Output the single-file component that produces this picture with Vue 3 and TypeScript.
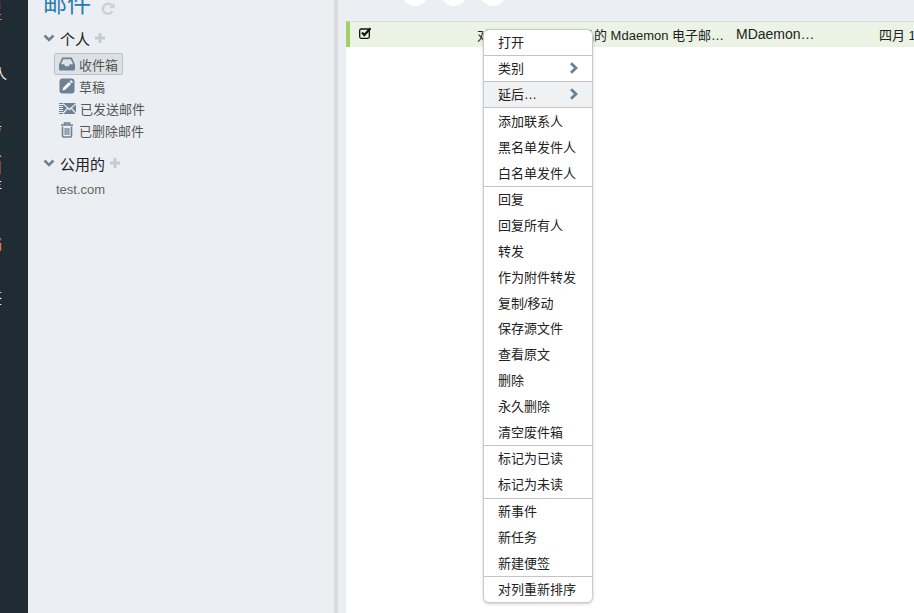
<script setup lang="ts">
interface Folder { name: string; icon: string; active?: boolean }
const folders: Folder[] = [
  { name: '收件箱', icon: 'inbox', active: true },
  { name: '草稿', icon: 'edit' },
  { name: '已发送邮件', icon: 'send' },
  { name: '已删除邮件', icon: 'trash' },
]
interface MenuItem { label: string; arrow?: boolean; hover?: boolean }
const groups: MenuItem[][] = [
  [{ label: '打开' }],
  [{ label: '类别', arrow: true }],
  [{ label: '延后…', arrow: true, hover: true }],
  [{ label: '添加联系人' }, { label: '黑名单发件人' }, { label: '白名单发件人' }],
  ['回复', '回复所有人', '转发', '作为附件转发', '复制/移动', '保存源文件', '查看原文', '删除', '永久删除', '清空废件箱'].map((label) => ({ label })),
  [{ label: '标记为已读' }, { label: '标记为未读' }],
  [{ label: '新事件' }, { label: '新任务' }, { label: '新建便签' }],
  [{ label: '对列重新排序' }],
]
const railItems = [
  { text: '信', cls: 'r-red', top: -7 },
  { text: '件', cls: 'r-orange', top: -2 },
  { text: '人', cls: 'r-white wide', top: 38 },
  { text: '务', cls: 'r-white', top: 35 },
  { text: '箱', cls: 'r-gold', top: 17 },
  { text: '存', cls: 'r-white', top: 0 },
  { text: '档', cls: 'r-orange', top: 40 },
  { text: '签', cls: 'r-white', top: 36 },
]
</script>

<template>
  <div class="page">
    <nav class="rail">
      <div v-for="r in railItems" :key="r.text" class="rail-item" :class="r.cls" :style="{ marginTop: r.top + 'px' }">{{ r.text }}</div>
    </nav>

    <aside class="side">
      <h1 class="title">邮件
        <svg class="refresh" viewBox="0 0 14 14" width="14" height="14"><path d="M11.300 9.200A5 5 0 1 1 10.600 3.400" fill="none" stroke="#cdd0d3" stroke-width="2.400"/><path d="M13.400 0.800v5.400H8z" fill="#cdd0d3"/></svg>
      </h1>

      <div class="group-head">
        <svg class="chev" viewBox="0 0 12 8" width="12" height="8"><path d="M1.500 1.500 6 6l4.500-4.500" fill="none" stroke="#6f8291" stroke-width="2.600"/></svg>
        <span>个人</span>
        <svg class="plus" viewBox="0 0 10 10" width="10" height="10"><path d="M5 0v10M0 5h10" stroke="#c2ccd5" stroke-width="3"/></svg>
      </div>

      <ul class="folders">
        <li v-for="f in folders" :key="f.name" class="folder" :class="{ active: f.active }">
          <svg v-if="f.icon === 'inbox'" class="ficon" viewBox="0 0 16 14" width="16" height="14"><path fill-rule="evenodd" fill="#6c8294" d="M3.200 0.500h9.600L16 7.500v4.500a1.500 1.500 0 0 1-1.500 1.500h-13A1.500 1.500 0 0 1 0 12V7.500zM4.200 2.200 2 7.200h3.200l1 2h3.600l1-2H14l-2.200-5z"/></svg>
          <svg v-else-if="f.icon === 'edit'" class="ficon" viewBox="0 0 16 16" width="16" height="16"><rect x="0.500" y="0.500" width="15" height="15" rx="3" fill="#6c8294"/><path d="M3.500 12.500l.7-2.800 5.800-5.800 2.100 2.100-5.800 5.800zM10.700 3.200l.8-.7a1 1 0 0 1 1.300 0l.7.7a1 1 0 0 1 0 1.300l-.7.8z" fill="#fff"/></svg>
          <svg v-else-if="f.icon === 'send'" class="ficon" viewBox="0 0 17 11" width="17" height="11"><path d="M0 .5h4M0 2.500h4M0 4.500h4M0 6.500h4M0 8.500h4M0 10.500h4" stroke="#6c8294"/><path d="M4 0h13L10.500 5.500zM4 1.500l4 3.500-4 4.500zM17 1.500v8l-4-4.500zM4.500 11l4.300-5 1.700 1.400 1.700-1.400 4.300 5z" fill="#6c8294"/></svg>
          <svg v-else class="ficon" viewBox="0 0 16 16" width="16" height="16"><path d="M5.500 2.500V1h5v1.500M2 3h12" fill="none" stroke="#6c8294" stroke-width="1.600"/><path d="M3.500 4.500v9.300A1.200 1.200 0 0 0 4.700 15h6.600a1.200 1.200 0 0 0 1.200-1.200V4.500" fill="none" stroke="#6c8294" stroke-width="1.600"/><path d="M6.200 6v7M8 6v7M9.800 6v7" stroke="#6c8294" stroke-width="1.200"/></svg>
          <span>{{ f.name }}</span>
        </li>
      </ul>

      <div class="group-head second">
        <svg class="chev" viewBox="0 0 12 8" width="12" height="8"><path d="M1.500 1.500 6 6l4.500-4.500" fill="none" stroke="#6f8291" stroke-width="2.600"/></svg>
        <span>公用的</span>
        <svg class="plus" viewBox="0 0 10 10" width="10" height="10"><path d="M5 0v10M0 5h10" stroke="#c2ccd5" stroke-width="3"/></svg>
      </div>
      <div class="domain">test.com</div>
    </aside>

    <div class="split"></div>

    <main class="main">
      <div class="toolbar">
        <span class="dot"></span><span class="dot"></span><span class="dot"></span>
      </div>
      <div class="list">
        <div class="row">
          <svg class="check" viewBox="0 0 13 12" width="13" height="12"><rect x="0.700" y="2" width="9.600" height="9.300" rx="1.500" fill="none" stroke="#111" stroke-width="1.300"/><path d="M3 5.500l2.300 2.500L11.500 1.200" fill="none" stroke="#111" stroke-width="2.200"/></svg>
          <span class="subject">对选择世界一流产品的 Mdaemon 电子邮…</span>
          <span class="from">MDaemon…</span>
          <span class="date">四月 17</span>
        </div>
      </div>
    </main>

    <div class="menu">
      <ul v-for="(g, i) in groups" :key="i" class="menu-group">
        <li v-for="m in g" :key="m.label" class="menu-item" :class="{ hover: m.hover }">
          <span>{{ m.label }}</span>
          <svg v-if="m.arrow" class="arrow" viewBox="0 0 10 12" width="10" height="12"><path d="M2 1.200 7 6l-5 4.800" fill="none" stroke="#6c8294" stroke-width="2.800"/></svg>
        </li>
      </ul>
    </div>
  </div>
</template>

<style scoped>
.page {
  position: relative;
  display: flex;
  width: 914px;
  height: 613px;
  overflow: hidden;
  font-family: "Liberation Sans", "Noto Sans CJK SC", sans-serif;
  background: #ebeef2;
}
ul { list-style: none; margin: 0; padding: 0; }
.rail {
  flex: 0 0 28px;
  background: #1f2c34;
  overflow: hidden;
}
.rail-item {
  width: 2px;
  height: 18px;
  display: flex;
  justify-content: flex-end;
  overflow: hidden;
  font-size: 14px;
  line-height: 18px;
}
.rail-item.wide { width: 7px; }
.r-red { color: #8a2b3c; }
.r-orange { color: #e8973f; }
.r-white { color: #f2f2f2; }
.r-gold { color: #eeb24d; height: 24px; font-size: 22px; line-height: 24px; }
.side {
  flex: 0 0 306px;
  box-sizing: border-box;
  background: #ebeef2;
  overflow: hidden;
}
.title {
  display: flex;
  align-items: flex-end;
  gap: 10px;
  height: 20px;
  margin: 0 0 0 15px;
  font-size: 24px;
  line-height: 32px;
  font-weight: 400;
  color: #2a7bb0;
}
.refresh { margin-bottom: 4px; flex: none; }
.group-head {
  display: flex;
  align-items: center;
  height: 20px;
  margin: 8px 0 0 15px;
  font-size: 15px;
  color: #222;
}
.group-head.second { margin-top: 12px; }
.chev { margin-right: 5px; flex: none; }
.plus { margin-left: 5px; flex: none; }
.folders { margin: 5px 0 0 26px; }
.folder {
  display: flex;
  align-items: center;
  box-sizing: border-box;
  width: fit-content;
  height: 22px;
  padding: 0 4px 0 5px;
  font-size: 13px;
  color: #555;
  border: 1px solid transparent;
  border-radius: 2px;
}
.folder.active {
  background: #dce1e6;
  border-color: #bcc3ca;
}
.ficon { margin-left: -1px; margin-right: 4px; flex: none; }
.domain {
  margin: 8px 0 0 28px;
  font-size: 13px;
  line-height: 18px;
  color: #666;
}
.split {
  flex: 0 0 4px;
  background: #dddddd;
}
.main {
  flex: 1;
  min-width: 0;
  display: flex;
  flex-direction: column;
  padding-left: 8px;
  background: #ebeef2;
}
.toolbar {
  flex: 0 0 21px;
  display: flex;
  gap: 13px;
  padding-left: 56px;
  align-items: flex-start;
}
.dot {
  width: 26px;
  height: 26px;
  margin-top: -20px;
  border-radius: 50%;
  background: #fff;
}
.list {
  flex: 1;
  background: #fff;
  overflow: hidden;
}
.row {
  display: grid;
  grid-template-columns: 123px 259px 143px 60px;
  align-items: center;
  box-sizing: border-box;
  width: 640px;
  height: 26px;
  padding-left: 4px;
  border-top: 1px solid #d7dbdf;
  border-left: 4px solid #a0d06a;
  background: #ebf3e4;
  font-size: 13px;
  color: #222;
  white-space: nowrap;
}
.check { margin: -3px 0 0 5px; }
.from { font-size: 14px; margin-top: -1px; }
.menu {
  position: absolute;
  left: 483px;
  top: 29px;
  width: 110px;
  box-sizing: border-box;
  background: #fff;
  border: 1px solid #cccccc;
  border-radius: 6px;
  box-shadow: 0 1px 3px rgba(0, 0, 0, .2);
  overflow: hidden;
}
.menu-group { border-bottom: 1px solid #c4c4c4; }
.menu-group:last-child { border-bottom: 0; }
.menu-item {
  display: flex;
  align-items: center;
  justify-content: space-between;
  box-sizing: border-box;
  height: 25.800px;
  padding: 0 13px 2px 14px;
  font-size: 13px;
  color: #222;
  white-space: nowrap;
}
.menu-group:nth-child(-n+3) .menu-item,
.menu-group:last-child .menu-item { height: 25px; }
.menu-group:nth-child(4) .menu-item { height: 26px; }
.menu-item.hover { background: #f0f1f3; }
.arrow { flex: none; }
</style>
